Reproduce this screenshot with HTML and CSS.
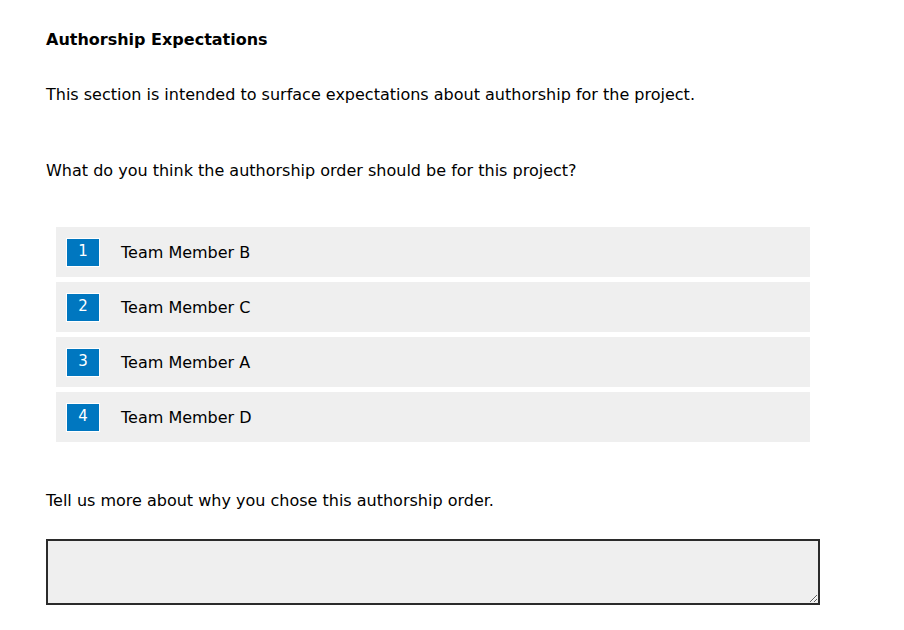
FILE: index.html
```html
<!DOCTYPE html>
<html lang="en">
<head>
    <meta charset="UTF-8">
    <title>Authorship Expectations</title>
    <link rel="stylesheet" href="styles.css">
</head>
<body>
    <div class="survey">
        <h2 class="title">Authorship Expectations</h2>
        <p class="intro">This section is intended to surface expectations about authorship for the project.</p>

        <p class="question">What do you think the authorship order should be for this project?</p>

        <!-- rank list -->
        <ul class="rankList">
            <li class="rankItem"><span class="rankNum">1</span><span class="rankText">Team Member B</span></li>
            <li class="rankItem"><span class="rankNum">2</span><span class="rankText">Team Member C</span></li>
            <li class="rankItem"><span class="rankNum">3</span><span class="rankText">Team Member A</span></li>
            <li class="rankItem"><span class="rankNum">4</span><span class="rankText">Team Member D</span></li>
        </ul>

        <p class="question why">Tell us more about why you chose this authorship order.</p>
        <textarea class="answer"></textarea>
    </div>
</body>
</html>
```

FILE: styles.css
```css
body {
    margin: 0;
    background-color: #ffffff;
    color: #000000;
    font-family: "DejaVu Sans", Verdana, sans-serif;
    font-size: 16px;
}

.survey {
    padding: 27px 0 0 46px;
    width: 774px;
}

.title {
    margin: 0;
    font-size: 16px;
    font-weight: bold;
    line-height: 26px;
}

.intro {
    margin: 31px 0 0 0;
    line-height: 22px;
}

.question {
    margin: 54px 0 0 0;
    line-height: 22px;
}

.rankList {
    list-style: none;
    margin: 45px 0 0 10px;
    padding: 0;
    width: 754px;
    display: flex;
    flex-direction: column;
    gap: 5px;
}

.rankItem {
    height: 50px;
    background-color: #efefef;
    display: flex;
    align-items: center;
}

.rankNum {
    box-sizing: border-box;
    width: 34px;
    height: 29px;
    margin-left: 10px;
    border: 1px solid #ffffff;
    background-color: #0077c0;
    color: #ffffff;
    font-size: 15px;
    line-height: 25px;
    text-align: center;
}

.rankText {
    margin-left: 21px;
}

.why {
    margin-top: 48px;
}

.answer {
    display: block;
    box-sizing: border-box;
    margin-top: 27px;
    width: 774px;
    height: 66px;
    border: 2px solid #2b2b2b;
    background-color: #efefef;
    resize: vertical;
}
```
